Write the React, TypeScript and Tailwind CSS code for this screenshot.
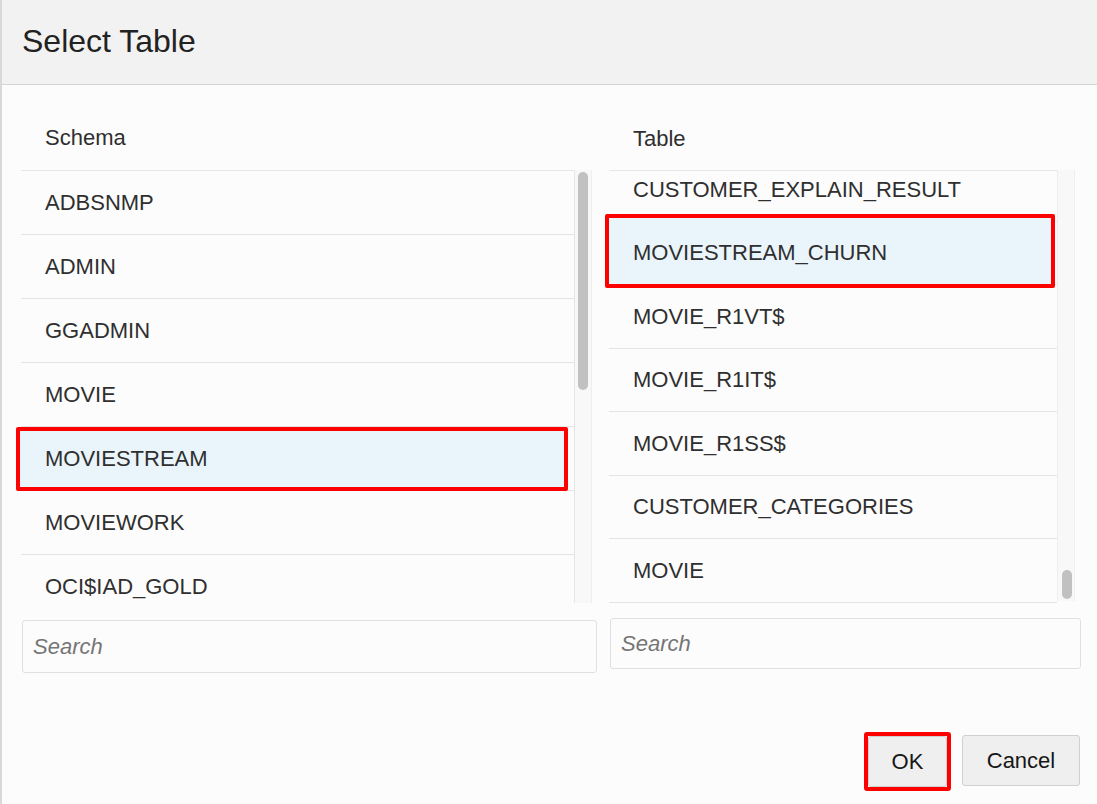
import React from "react";

const schemas = [
  "ADBSNMP",
  "ADMIN",
  "GGADMIN",
  "MOVIE",
  "MOVIESTREAM",
  "MOVIEWORK",
  "OCI$IAD_GOLD",
];

const tables = [
  "CUSTOMER_EXPLAIN_RESULT",
  "MOVIESTREAM_CHURN",
  "MOVIE_R1VT$",
  "MOVIE_R1IT$",
  "MOVIE_R1SS$",
  "CUSTOMER_CATEGORIES",
  "MOVIE",
];

function SearchBox({ className }: { className: string }) {
  return (
    <input
      type="text"
      placeholder="Search"
      className={
        "border border-[#e0e0e0] rounded-[3px] bg-[#fcfcfc] pl-[10px] text-[22px] italic text-[#333] placeholder:text-[#757575] outline-none " +
        className
      }
    />
  );
}

export default function App() {
  return (
    <div className="w-[1097px] h-[804px] bg-[#fcfcfc] border-l-2 border-[#d8d8d8] flex flex-col font-['Liberation_Sans',Arial,sans-serif] text-[#2f2f2f]">
      {/* header */}
      <div className="h-[85px] shrink-0 bg-[#f2f2f2] border-b border-[#d5d5d5] flex items-center pl-[20px] pb-[2px]">
        <h1 className="text-[32px] text-[#222]">Select Table</h1>
      </div>

      <div className="flex gap-[11px] pl-[19px]">
        {/* schema column */}
        <div className="w-[577px] flex flex-col">
          <div className="h-[85px] flex items-end pb-[19px] pl-[24px] text-[22px] leading-[26px]">
            Schema
          </div>
          <div className="h-[433px] flex">
            <div className="w-[554px] border-t border-r border-[#e6e6e6]">
              <div className="h-[432px] overflow-hidden -ml-[6px] pl-[6px]">
                {schemas.map((s) => (
                  <div
                    key={s}
                    className="relative h-[64px] border-b border-[#e4e4e4] flex items-center pl-[24px] text-[22px]"
                  >
                    {s === "MOVIESTREAM" && (
                      <div className="absolute -left-[5px] right-[6px] top-0 -bottom-[1px] bg-[#eaf4fb] border-4 border-[#ff0000] rounded-[2px]" />
                    )}
                    <span className="relative">{s}</span>
                  </div>
                ))}
              </div>
            </div>
            <div className="w-[17px] bg-[#f8f8f8] border-r border-[#eeeeee] pt-[2px] pl-[3px]">
              <div className="w-[10px] h-[218px] rounded-full bg-[#c1c1c1]" />
            </div>
          </div>
          <SearchBox className="mt-[17px] ml-[1px] w-[575px] h-[53px]" />
        </div>

        {/* table column */}
        <div className="w-[472px] flex flex-col">
          <div className="h-[85px] flex items-end pb-[18px] pl-[24px] text-[22px] leading-[26px]">
            Table
          </div>
          <div className="h-[433px] flex">
            <div className="w-[448px] border-t border-[#e6e6e6]">
              <div className="h-[432px] overflow-hidden -ml-[6px] pl-[6px]">
                <div className="-mt-[13px]">
                  {tables.map((t) => (
                    <div
                      key={t}
                      className="relative h-[63.5px] border-b border-[#e4e4e4] flex items-center pl-[24px] text-[22px]"
                    >
                      {t === "MOVIESTREAM_CHURN" && (
                        <div className="absolute -left-[4px] right-[2px] -top-[8px] -bottom-[4px] bg-[#eaf4fb] border-4 border-[#ff0000] rounded-[2px]" />
                      )}
                      <span className="relative">{t}</span>
                    </div>
                  ))}
                </div>
              </div>
            </div>
            <div className="w-[18px] h-[431px] bg-[#f8f8f8] border-x border-[#eeeeee] flex flex-col justify-end pb-[2px] pl-[4px]">
              <div className="w-[10px] h-[29px] rounded-full bg-[#c1c1c1]" />
            </div>
          </div>
          <SearchBox className="mt-[15px] ml-[1px] w-[471px] h-[51px]" />
        </div>
      </div>

      {/* footer */}
      <div className="mt-auto flex justify-end items-end gap-[15px] pr-[17px] pb-[17px]">
        <div className="relative">
          <div className="absolute -inset-[4px] border-4 border-[#ff0000] rounded-[3px]" />
          <button className="w-[79px] h-[51px] bg-[#efefef] border border-[#d0d0d0] rounded-[3px] text-[22px] text-[#161616]">
            OK
          </button>
        </div>
        <button className="w-[118px] h-[51px] mb-[1px] bg-[#efefef] border border-[#d0d0d0] rounded-[3px] text-[22px] text-[#161616]">
          Cancel
        </button>
      </div>
    </div>
  );
}
